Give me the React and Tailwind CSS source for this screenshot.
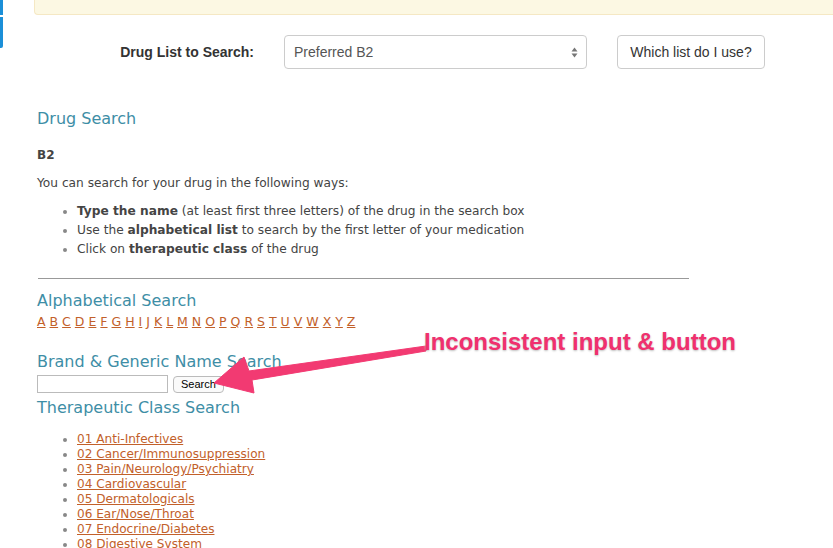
import React from 'react';

const letters = 'ABCDEFGHIJKLMNOPQRSTUVWXYZ'.split('');

const classes = [
  '01 Anti-Infectives',
  '02 Cancer/Immunosuppression',
  '03 Pain/Neurology/Psychiatry',
  '04 Cardiovascular',
  '05 Dermatologicals',
  '06 Ear/Nose/Throat',
  '07 Endocrine/Diabetes',
  '08 Digestive System',
];

const verdana = { fontFamily: '"DejaVu Sans", Verdana, sans-serif' };
const helv = { fontFamily: '"Liberation Sans", Arial, sans-serif' };

export default function App() {
  return (
    <div className="relative w-[833px] h-[548px] overflow-hidden bg-white text-[#333]">
      {/* left edge tab */}
      <div className="absolute left-0 top-0 flex flex-col gap-[2px]">
        <div className="w-[3px] h-[15px] bg-[#1b8fd8]" />
        <div className="w-[3px] h-[31px] bg-[#1b8fd8] rounded-br-[2px]" />
      </div>

      {/* alert strip */}
      <div className="ml-[34px] h-[15px] bg-[#fcf8e3] border-l border-b border-[#f5e8c4] rounded-bl-[4px]" />

      {/* list selector row */}
      <div className="mt-[20px] flex items-center" style={helv}>
        <label className="w-[254px] text-right text-[14px] font-bold text-[#333]">Drug List to Search:</label>
        <div className="ml-[30px] w-[303px] h-[34px] border border-[#ccc] rounded-[4px] flex items-center justify-between pl-[9px] pr-[8px] text-[14px] text-[#555]">
          <span>Preferred B2</span>
          <svg width="7" height="11" viewBox="0 0 7 11">
            <path d="M3.5 0.5 L6.5 4.5 L0.5 4.5 Z" fill="#777" />
            <path d="M3.5 10.5 L6.5 6.5 L0.5 6.5 Z" fill="#777" />
          </svg>
        </div>
        <button className="ml-[30px] w-[148px] h-[34px] border border-[#ccc] rounded-[4px] bg-white text-[14px] text-[#333]">
          Which list do I use?
        </button>
      </div>

      <div className="pl-[37px]" style={verdana}>
        <h2 className="mt-[40px] text-[16px] leading-[20px] text-[#3e8ea6]">Drug Search</h2>
        <p className="mt-[18px] text-[12px] leading-[16px] font-bold text-[#444]">B2</p>
        <p className="mt-[11px] text-[12.2px] leading-[18px] text-[#444]">You can search for your drug in the following ways:</p>
        <ul className="mt-[10px] pl-[40px] list-disc text-[12.2px] leading-[19px] text-[#444] marker:text-[#888]">
          <li><b>Type the name</b> (at least first three letters) of the drug in the search box</li>
          <li>Use the <b>alphabetical list</b> to search by the first letter of your medication</li>
          <li>Click on <b>therapeutic class</b> of the drug</li>
        </ul>
        <hr className="mt-[19px] ml-[1px] w-[651px] border-0 border-t border-[#999]" />

        <h2 className="mt-[12px] text-[16px] leading-[20px] text-[#3e8ea6]">Alphabetical Search</h2>
        <div className="mt-[3px] text-[12.5px] leading-[16px] text-[#c2602a] whitespace-nowrap">
          {letters.map((l, i) => (
            <React.Fragment key={l}>
              <a href="#" className="underline">{l}</a>
              {i < letters.length - 1 ? ' ' : ''}
            </React.Fragment>
          ))}
        </div>

        <h2 className="mt-[22px] text-[16px] leading-[20px] text-[#3e8ea6]">Brand &amp; Generic Name Search</h2>
        <div className="mt-[3px] flex items-center gap-[5px]">
          <input className="w-[131px] h-[18px] border border-[#bbb] bg-white outline-none" />
          <button
            className="h-[17px] px-[7px] border border-[#bbb] rounded-[4px] bg-[#fafafa] text-[11px] leading-[15px] text-black"
            style={helv}
          >
            Search
          </button>
        </div>

        <h2 className="mt-[5px] text-[16px] leading-[20px] text-[#3e8ea6]">Therapeutic Class Search</h2>
        <ul className="mt-[14px] pl-[40px] list-disc text-[12.1px] leading-[15px] text-[#c2602a] marker:text-[#888]">
          {classes.map((c) => (
            <li key={c}><a href="#" className="underline">{c}</a></li>
          ))}
        </ul>
      </div>

      {/* annotation */}
      <svg className="absolute left-0 top-0 pointer-events-none" width="833" height="548">
        <polygon
          points="426,346 426,351 252,380 254,393 214,383 244,357 249,371"
          fill="#f23a72"
          stroke="#f23a72"
          strokeLinejoin="round"
          strokeWidth="1"
        />
      </svg>
      <div
        className="absolute left-[424px] top-[327px] text-[24px] leading-[30px] font-bold text-[#f0306e] whitespace-nowrap"
        style={{ ...helv, textShadow: '0 1px 2px rgba(0,0,0,0.25), 0 0 2px #fff' }}
      >
        Inconsistent input &amp; button
      </div>
    </div>
  );
}
